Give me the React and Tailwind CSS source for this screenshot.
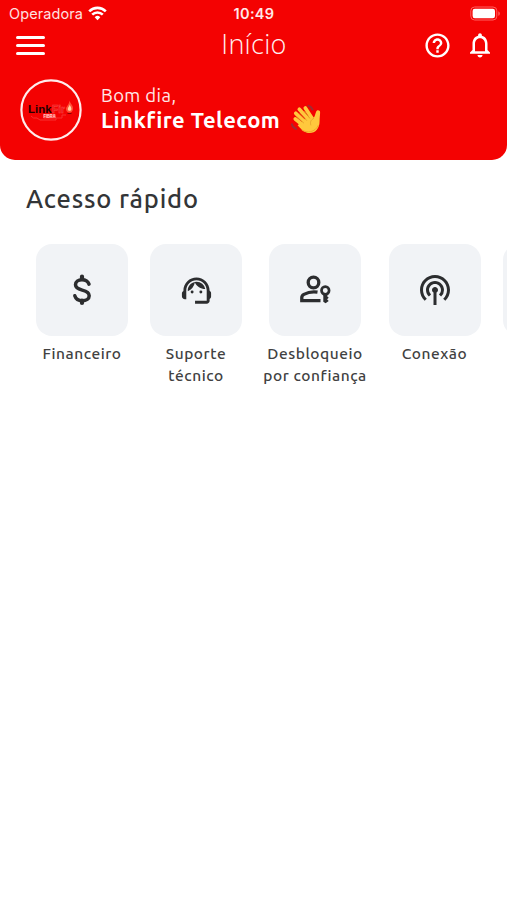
import React from "react";
import { MdHelpOutline, MdNotificationsNone, MdPodcasts, MdSupportAgent } from "react-icons/md";

function WifiIcon() {
  return (
    <svg className="h-[15px] w-[19px]" viewBox="0 0 19 15" fill="none" stroke="#fff" strokeWidth="2.6">
      <path d="M1.2 5.3a11.8 11.8 0 0 1 16.6 0" />
      <path d="M4.2 8.6a7.6 7.6 0 0 1 10.6 0" />
      <path d="M9.5 14.2 6.7 11.2a4 4 0 0 1 5.6 0Z" fill="#fff" stroke="none" />
    </svg>
  );
}

function BatteryIcon() {
  return (
    <svg className="h-[15px] w-[31px]" viewBox="0 0 31 15" fill="none">
      <rect x="0.8" y="1" width="26" height="13" rx="3.8" stroke="#ff6060" />
      <rect x="2.6" y="2.8" width="22.4" height="9.4" rx="2.2" fill="#fff" />
      <path d="M28.3 5.2c2 .8 2 3.800 0 4.600Z" fill="#ff6060" />
    </svg>
  );
}

function WaveIcon() {
  return (
    <svg className="h-[32px] w-[32px]" viewBox="0 0 32 32" fill="none" strokeLinecap="round">
      <path d="M17.500 1.800c2 .5 3.200 1.800 4 3.700M.9 20.300c.5 2.500 2 3.900 4.200 4.700" stroke="#a12a32" strokeWidth="2" />
      <g stroke="#ffc83d" strokeWidth="3.700">
        <path d="M13 22 4.300 15" />
        <path d="M15 19 4.800 9.300" />
        <path d="M19 17 8.300 5.300" />
        <path d="M21.500 15 14.300 4" />
      </g>
      <path d="m10.500 18 7-6 4.500 2.300c1.800-1 1.900-3.800 3.200-6.800.9-2 3.900-1.500 3.900.7 0 2.900-.5 4.800-.5 8.800 0 7.500-4 12-10 12-4.500 0-7-2.300-12-7.800Z" fill="#ffc83d" />
      <path d="m6.500 13.300 6 5.500M9 9.300l6.500 7M13.500 7.200l5.200 7" stroke="#df9322" strokeWidth=".8" />
      <path d="M22.500 14.500c-3 1.500-3.500 4-2.700 6.500" stroke="#e5a12c" strokeWidth=".9" />
      <path d="M11 26c5 3.500 13 2.500 16.200-4.500" stroke="#f2a62c" strokeWidth="1" />
    </svg>
  );
}

function Logo() {
  return (
    <svg className="h-[62px] w-[62px]" viewBox="0 0 62 62" fill="none">
      <circle cx="31" cy="31" r="29.600" stroke="#ffecec" strokeWidth="2.200" />
      <path d="M11 37q2 3 6 2l3 2h16v-2h6v-3h4" stroke="#f83030" strokeWidth="1" />
      <text x="8" y="34.300" textLength="23.500" lengthAdjust="spacingAndGlyphs" fontFamily="Liberation Sans, sans-serif" fontSize="11" fontWeight="700" fill="#260000">Link</text>
      <text x="32" y="34.300" textLength="13" lengthAdjust="spacingAndGlyphs" fontFamily="Liberation Sans, sans-serif" fontSize="11" fontWeight="700" fill="#e81515" stroke="#ff4a4a" strokeWidth=".5">Fir</text>
      <rect x="23" y="35" width="13" height="4.500" rx="1" fill="#ff3030" />
      <text x="23.500" y="39" textLength="12" lengthAdjust="spacingAndGlyphs" fontFamily="Liberation Sans, sans-serif" fontSize="4.800" fontWeight="700" fill="#ffd0d0">FIBRA</text>
      <path d="M49.500 21.500c.4 3 4 5 3.500 8.500-.3 2.300-1.700 3.700-3.500 3.700s-3.500-1.400-3.500-3.700c0-2.500 3-4 3.500-8.500Z" fill="#ff5038" />
      <path d="M49.700 25.500c.3 2 2 2.700 1.700 4.700-.3 2-3.300 2-3.600 0-.1-1.700 1.600-2.500 1.900-4.700Z" fill="#ffd2a0" />
      <path d="M47.500 34.500h4" stroke="#8e0000" strokeWidth="1" />
    </svg>
  );
}

function DollarIcon() {
  return (
    <svg className="h-9 w-9" viewBox="0 0 36 36" fill="none" stroke="#2c2d2f" strokeWidth="3.500" strokeLinecap="round" strokeLinejoin="round">
      <path d="M18 4.500v2.500M18 28.500v2.500" strokeWidth="4.200" />
      <path d="M25 12.200c-1-2.800-3.500-4.400-7-4.400-3.800 0-6.500 2-6.500 5 0 3.200 2.700 4.300 6.700 5.300 4.200 1 7 2.200 7 5.600 0 3-2.900 5-7 5-3.800 0-6.400-1.800-7.400-5" />
    </svg>
  );
}

function PersonKeyIcon() {
  return (
    <svg className="h-9 w-9" viewBox="0 0 36 36" fill="none" stroke="#2c2d2f" strokeWidth="3.300">
      <circle cx="16.500" cy="10.500" r="5.300" />
      <path d="M20.500 20.200c-5.300-.8-10 .3-13.600 2.200-1.200.6-2.100 1.800-2.100 3.100v3.100h18.700" />
      <circle cx="28.300" cy="18.500" r="3.800" strokeWidth="2.700" />
      <path d="M26.300 22h3.900v2.200l1.500 1.500-1.600 1.600 1.600 1.700-3.100 2.200-2.300-1.500Z" fill="#2c2d2f" stroke="none" />
    </svg>
  );
}

function Shortcut({ icon, lines, className }) {
  return (
    <div className={`flex shrink-0 flex-col items-center ${className}`}>
      <div className="flex h-[92px] w-[92px] items-center justify-center rounded-[16px] bg-[#f1f3f6] text-[#2c2d2f]">{icon}</div>
      <div className="mt-[7px] flex flex-col items-center text-[15.500px] font-medium leading-[22px] tracking-[0.55px] text-[#414141]">
        {lines.map((text) => (
          <span key={text} className="whitespace-nowrap">{text}</span>
        ))}
      </div>
    </div>
  );
}

export default function App() {
  return (
    <div className="h-[900px] w-[507px] overflow-hidden bg-white [font-family:Ubuntu,'Noto_Sans',sans-serif]">
      <header className="h-[159.500px] rounded-b-[15px] bg-[#f40202] text-white">
        <div className="grid h-[27px] grid-cols-3 items-center pl-[9px] pr-[6px] [font-family:Inter,sans-serif]">
          <div className="flex items-center gap-[5px] text-[14.500px] tracking-[0.1px] text-[#ffe0e0]">
            <span>Operadora</span>
            <WifiIcon />
          </div>
          <span className="pr-[2px] text-center text-[14.500px] font-semibold tracking-[0.3px] text-[#ffe8e8]">10:49</span>
          <div className="flex justify-end"><BatteryIcon /></div>
        </div>
        <div className="grid h-[36px] grid-cols-[1fr_auto_1fr] items-center pl-4 pr-[12px]">
          <div className="flex w-[29px] flex-col gap-[5px]">
            <div className="h-[3px] rounded-full bg-white" />
            <div className="h-[3px] rounded-full bg-white" />
            <div className="h-[3px] rounded-full bg-white" />
          </div>
          <h1 className="pb-[2px] pr-[3px] text-[27px] font-light leading-[34px] tracking-[0.3px] text-[#fff0f0] [font-family:'Open_Sans',sans-serif]">Início</h1>
          <div className="flex items-center justify-end gap-[13px]">
            <MdHelpOutline className="h-[29px] w-[29px]" />
            <MdNotificationsNone className="h-[30px] w-[30px]" />
          </div>
        </div>
        <div className="flex pl-5 pt-[16px]">
          <Logo />
          <div className="ml-[19px] flex flex-col pt-1">
            <span className="text-[18.500px] leading-[24px] tracking-[0.4px] text-[#ffe8e8]">Bom dia,</span>
            <div className="flex h-[26px] items-center gap-[11px]">
              <span className="text-[22px] font-bold leading-[26px] tracking-[0.45px]">Linkfire Telecom</span>
              <WaveIcon />
            </div>
          </div>
        </div>
      </header>
      <main>
        <h2 className="pl-[26px] pt-[21px] text-[25.500px] font-medium leading-[36px] tracking-[0.8px] text-[#333537]">Acesso rápido</h2>
        <div className="flex pl-[25px] pt-[27.500px]">
          <Shortcut className="w-[114px]" icon={<DollarIcon />} lines={["Financeiro"]} />
          <Shortcut className="w-[114px]" icon={<MdSupportAgent className="h-[35px] w-[35px]" />} lines={["Suporte", "técnico"]} />
          <Shortcut className="w-[124px]" icon={<PersonKeyIcon />} lines={["Desbloqueio", "por confiança"]} />
          <Shortcut className="w-[115px]" icon={<MdPodcasts className="h-[36px] w-[36px]" />} lines={["Conexão"]} />
          <Shortcut className="w-[114px]" icon={null} lines={[]} />
        </div>
      </main>
    </div>
  );
}
